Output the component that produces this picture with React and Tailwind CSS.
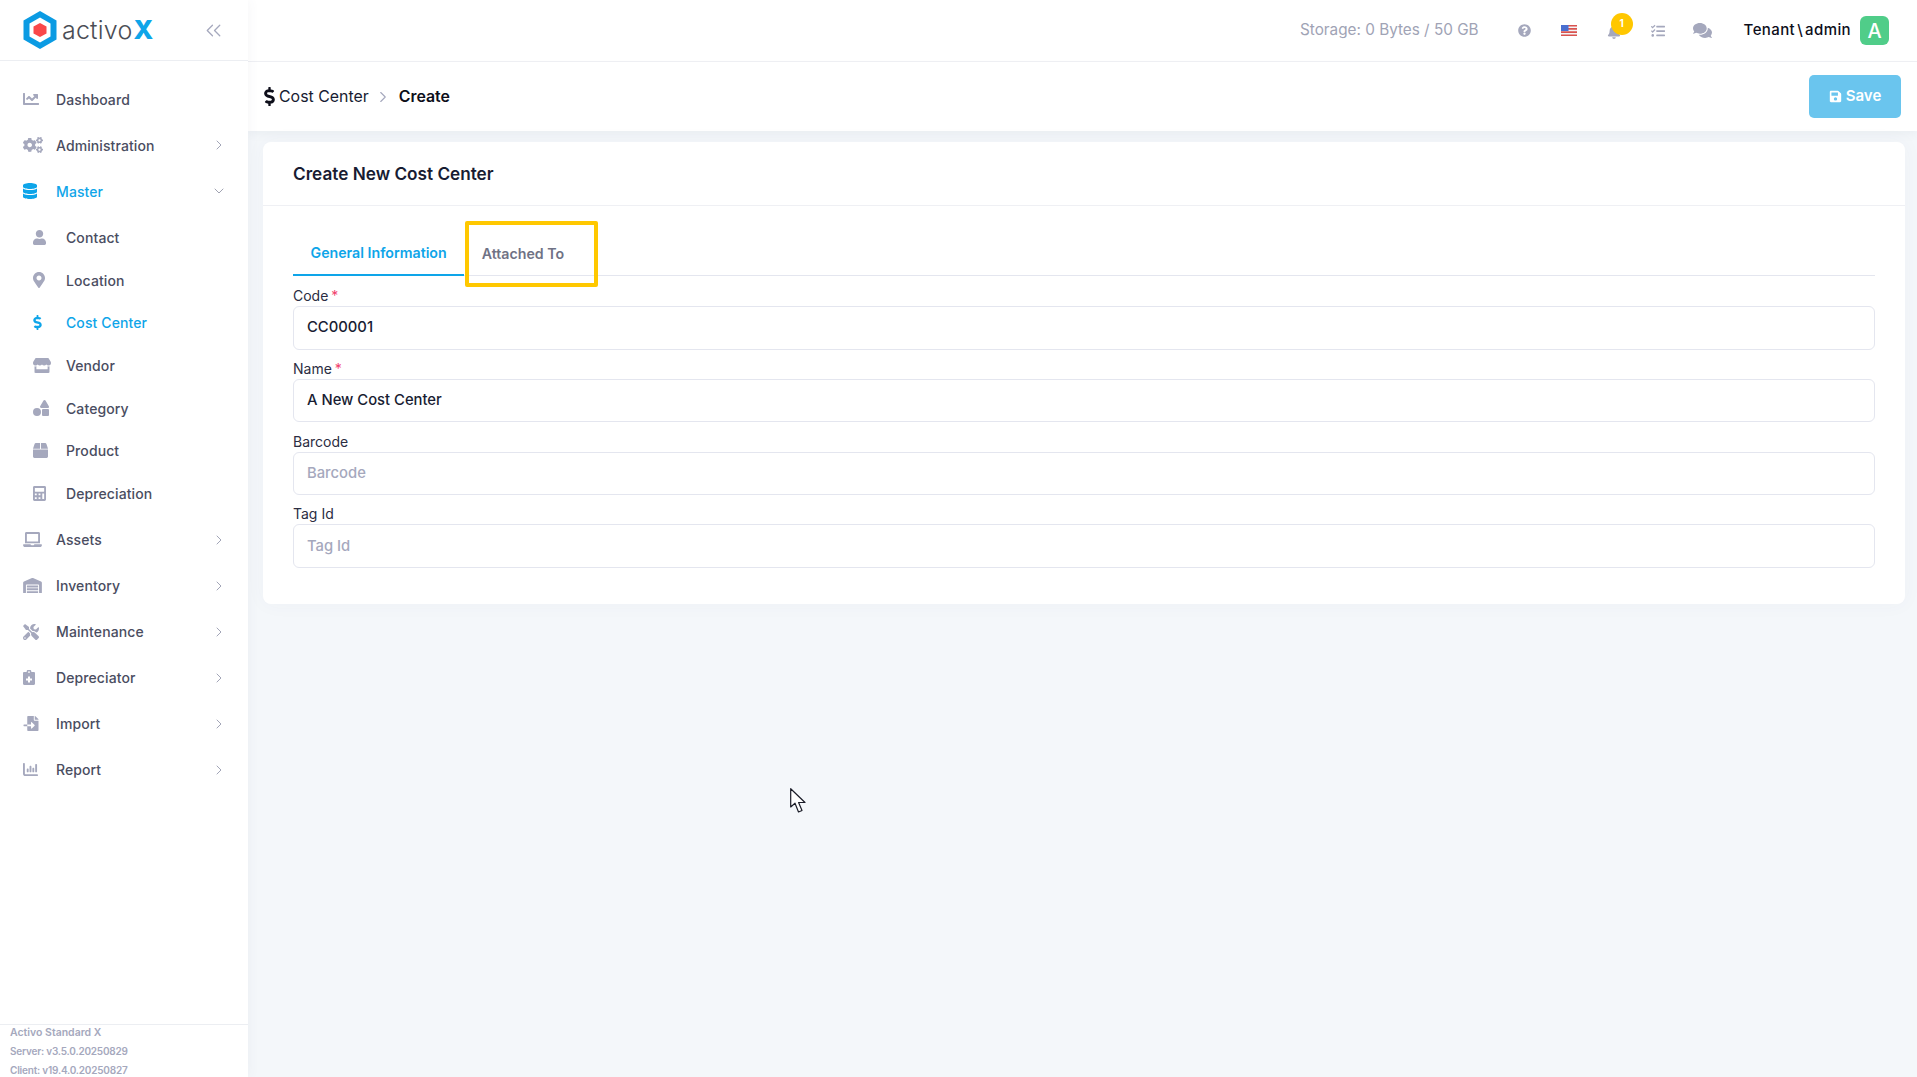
import React from 'react';
import {
  FaChartLine, FaCogs, FaDatabase, FaUser, FaMapMarkerAlt, FaDollarSign, FaStore, FaShapes, FaBox,
  FaCalculator, FaLaptop, FaWarehouse, FaTools, FaFileImport, FaQuestionCircle, FaBell, FaTasks,
  FaComments, FaSave,
} from 'react-icons/fa';
import { FaChartColumn } from 'react-icons/fa6';
import { ChevronRight, ChevronDown, ChevronsLeft } from 'lucide-react';

const DepreciatorIcon = ({ className }) => (
  <svg viewBox="0 0 12 15" className={className} fill="currentColor">
    <path fillRule="evenodd" d="M1.2 2H3.6a2.4 2.4 0 0 1 4.8 0h2.4c.7 0 1.2.5 1.2 1.2v10.6c0 .7-.5 1.2-1.2 1.2H1.2C.5 15 0 14.5 0 13.8V3.2C0 2.5.5 2 1.2 2zM6 1.2a.9.9 0 1 0 0 1.8.9.9 0 0 0 0-1.8zM5 6.5v2H3v2h2v2h2v-2h2v-2H7v-2z" />
  </svg>
);

const topItems = [
  { icon: FaChartLine, dims: 'h-[16px] w-[16px]', label: 'Dashboard' },
  { icon: FaCogs, dims: 'h-[16px] w-[20px]', label: 'Administration', arrow: true },
  { icon: FaDatabase, dims: 'h-[16px] w-[14px]', label: 'Master', open: true },
];

const subItems = [
  { icon: FaUser, dims: 'h-[15px] w-[13px]', label: 'Contact' },
  { icon: FaMapMarkerAlt, dims: 'h-[16px] w-[12px]', label: 'Location' },
  { icon: FaDollarSign, dims: 'h-[15px] w-[9px]', label: 'Cost Center', active: true },
  { icon: FaStore, dims: 'h-[15px] w-[18px]', label: 'Vendor' },
  { icon: FaShapes, dims: 'h-[16px] w-[16px]', label: 'Category' },
  { icon: FaBox, dims: 'h-[15px] w-[15px]', label: 'Product' },
  { icon: FaCalculator, dims: 'h-[15px] w-[13px]', label: 'Depreciation' },
];

const bottomItems = [
  { icon: FaLaptop, dims: 'h-[15px] w-[19px]', label: 'Assets', arrow: true },
  { icon: FaWarehouse, dims: 'h-[15px] w-[19px]', label: 'Inventory', arrow: true },
  { icon: FaTools, dims: 'h-[16px] w-[16px]', label: 'Maintenance', arrow: true },
  { icon: DepreciatorIcon, dims: 'h-[15px] w-[12px]', label: 'Depreciator', arrow: true },
  { icon: FaFileImport, dims: 'h-[15px] w-[16px]', label: 'Import', arrow: true },
  { icon: FaChartColumn, dims: 'h-[15px] w-[15px]', label: 'Report', arrow: true },
];

const NavRow = ({ item }) => {
  const Icon = item.icon;
  return (
    <div className={`flex h-[46px] items-center pl-[23px] pr-[21px] text-[14px] font-medium ${item.open ? 'text-[#0ea5e9]' : 'text-[#4a4d61]'}`}>
      <span className="flex w-[33px] shrink-0 items-center">
        <Icon className={`${item.dims} ${item.open ? 'text-[#0ea5e9]' : 'text-[#a5a8bd]'}`} />
      </span>
      <span className="flex-1 tracking-[0.1px]">{item.label}</span>
      {item.arrow && <ChevronRight size={16} strokeWidth={1.25} className="text-[#8f93a8]" />}
      {item.open && <ChevronDown size={16} strokeWidth={1} className="text-[#6f7389]" />}
    </div>
  );
};

const Sidebar = () => (
  <aside className="z-10 flex h-full w-[248px] shrink-0 flex-col bg-white shadow-[0_0_12px_rgba(80,90,120,0.06)]">
    {/* Logo */}
    <div className="flex h-[61px] shrink-0 items-center border-b border-[#eceef2] pl-[23px] pr-[22px]">
      <svg width="34" height="38" viewBox="0 0 34 38" className="shrink-0">
        <path d="M17 0 33.5 9.5V28.5L17 38 .5 28.5V9.5Z" fill="#0b9be3" />
        <path d="M17 6.5 27.5 12.5V25.5L17 31.5 6.5 25.5V12.5Z" fill="#fff" />
        <path d="M17 12 23.5 15.5V22.5L17 26 10.5 22.5V15.5Z" fill="#f9484a" />
      </svg>
      <span className="ml-[5px] flex-1 text-[25px] font-light leading-none tracking-[0.2px] text-[#4a4d55]">
        activo<span className="ml-[1px] text-[26px] font-extrabold text-[#0ea5e9]">X</span>
      </span>
      <ChevronsLeft size={25} strokeWidth={1.25} className="text-[#a5a8bd]" />
    </div>

    {/* Navigation */}
    <nav className="flex-1 pt-[15px]">
      {topItems.map((item) => <NavRow key={item.label} item={item} />)}
      <div className="py-[2px]">
        {subItems.map(({ icon: Icon, dims, label, active }) => (
          <div key={label} className={`flex h-[42.7px] items-center pl-[33px] text-[14px] font-medium ${active ? 'text-[#0ea5e9]' : 'text-[#4a4d61]'}`}>
            <span className="flex w-[33px] shrink-0 items-center">
              <Icon className={`${dims} ${active ? 'text-[#0ea5e9]' : 'text-[#a5a8bd]'}`} />
            </span>
            <span className="tracking-[0.1px]">{label}</span>
          </div>
        ))}
      </div>
      {bottomItems.map((item) => <NavRow key={item.label} item={item} />)}
    </nav>

    {/* Version */}
    <div className="h-[53px] shrink-0 overflow-hidden border-t border-[#eceef2] pl-[10px] text-[10px] font-semibold leading-[19px] text-[#a5a8bd]">
      <p className="-mt-[2px] text-[10.5px]">Activo Standard X</p>
      <p className="tracking-[-0.2px]">Server: v3.5.0.20250829</p>
      <p className="tracking-[-0.2px]">Client: v19.4.0.20250827</p>
    </div>
  </aside>
);

const TopBar = () => (
  <header className="flex h-[62px] shrink-0 items-center border-b border-[#eff0f4] bg-white pr-[28px]">
    <span className="ml-auto text-[15.3px] text-[#a0a3b5]">Storage: 0 Bytes / 50 GB</span>
    <span className="ml-[39px] flex w-[14px] justify-center"><FaQuestionCircle size={13} className="text-[#a5a8bd]" /></span>
    <svg width="16" height="11" viewBox="0 0 16 11" className="ml-[29px]">
      <rect width="16" height="11" fill="#f4f4f6" />
      <path d="M0 0h16v1.6H0zM0 3.1h16v1.6H0zM0 6.3h16v1.6H0zM0 9.4h16V11H0z" fill="#d9534f" />
      <rect width="7.5" height="6" fill="#4a6fd0" />
    </svg>
    <span className="relative ml-[30px] flex w-[14px] justify-center">
      <FaBell size={14} className="mt-[2px] text-[#a5a8bd]" />
      <span className="absolute -top-[10px] left-[4px] flex h-[22px] w-[22px] items-center justify-center rounded-full bg-[#ffc700] text-[10px] font-bold text-white">1</span>
    </span>
    <span className="ml-[30px] flex w-[14px] justify-center"><FaTasks size={14} className="text-[#a5a8bd]" /></span>
    <span className="ml-[28px] flex w-[20px] justify-center"><FaComments size={19} className="text-[#a5a8bd]" /></span>
    <span className="ml-[31px] text-[15px] font-medium tracking-[0.4px] text-[#0d0e1a]">
      Tenant<span className="mx-[2px]">\</span>admin
    </span>
    <span className="ml-[9px] flex h-[29px] w-[29px] items-center justify-center rounded-[6px] bg-[#50cd89] text-[20px] font-medium text-white">A</span>
  </header>
);

const Breadcrumb = () => (
  <div className="flex h-[69px] shrink-0 items-center bg-white pl-[12px] pr-[16px] shadow-[0_4px_8px_rgba(80,90,120,0.05)]">
    <FaDollarSign size={19} className="text-[#0d0e1a]" />
    <span className="text-[15.9px] text-[#181c32]">Cost Center</span>
    <ChevronRight size={18} strokeWidth={1.5} className="ml-[5px] text-[#a5a8bd]" />
    <span className="ml-[7px] text-[15.9px] font-semibold text-[#0d0e1a]">Create</span>
    <button className="ml-auto flex h-[43px] w-[92px] items-center justify-center gap-[4px] rounded-[5px] bg-[#6ac5ee] text-[15px] font-semibold text-white">
      <FaSave size={13} />
      Save
    </button>
  </div>
);

const Field = ({ label, required, value, placeholder }) => (
  <div className="mb-[8.3px]">
    <label className="block h-[21px] text-[14px] leading-[21px] text-[#2b2d42]">
      {label}
      {required && <span className="ml-[3px] text-[#f1416c]">*</span>}
    </label>
    <input
      readOnly
      value={value}
      placeholder={placeholder}
      className="block h-[43.5px] w-full rounded-[6px] border border-[#e4e6ef] bg-white px-[13px] pb-[1px] text-[14.8px] font-medium text-[#181c32] outline-none placeholder:text-[#a5a8bd]"
    />
  </div>
);

const CostCenterCard = () => (
  <section className="ml-[15px] mr-[12px] mt-[11px] h-[462px] rounded-[8px] bg-white shadow-[0_0_20px_rgba(76,87,125,0.04)]">
    <div className="flex h-[64px] items-center border-b border-[#eff0f4] pl-[30px] text-[17.2px] font-semibold text-[#181c32]">
      Create New Cost Center
    </div>
    <div className="px-[30px]">
      {/* Tabs */}
      <div className="mt-[16px] flex h-[54px] border-b border-[#e4e6ef] text-[14.2px] font-semibold">
        <div className="-mb-[1px] flex items-center border-b-2 border-[#0ea5e9] px-[17.5px] pt-[10px] text-[#0ea5e9]">General Information</div>
        <div className="relative flex items-center px-[17.5px] pt-[10px] text-[#6f7285]">
          Attached To
          <span className="absolute left-[1px] -top-[1px] h-[66px] w-[133px] rounded-[2px] border-[4px] border-[#ffc800]" />
        </div>
      </div>
      <div className="pt-[9px]">
        <Field label="Code" required value="CC00001" />
        <Field label="Name" required value="A New Cost Center" />
        <Field label="Barcode" placeholder="Barcode" />
        <Field label="Tag Id" placeholder="Tag Id" />
      </div>
    </div>
  </section>
);

const Cursor = () => (
  <svg width="17" height="25" viewBox="0 0 17 25" className="absolute left-[790px] top-[788px] z-20">
    <path d="M.7.7V19L5 15.2 8.5 24l3.5-1.5L8.6 14.500H15Z" fill="#fff" stroke="#1b1d28" strokeWidth="1.2" strokeLinejoin="round" />
  </svg>
);

export default function App() {
  return (
    <div className="relative flex h-screen w-full overflow-hidden bg-[#f4f7fa] font-[Inter,sans-serif]">
      <Sidebar />
      <main className="flex min-w-0 flex-1 flex-col">
        <TopBar />
        <Breadcrumb />
        <CostCenterCard />
      </main>
      <Cursor />
    </div>
  );
}
